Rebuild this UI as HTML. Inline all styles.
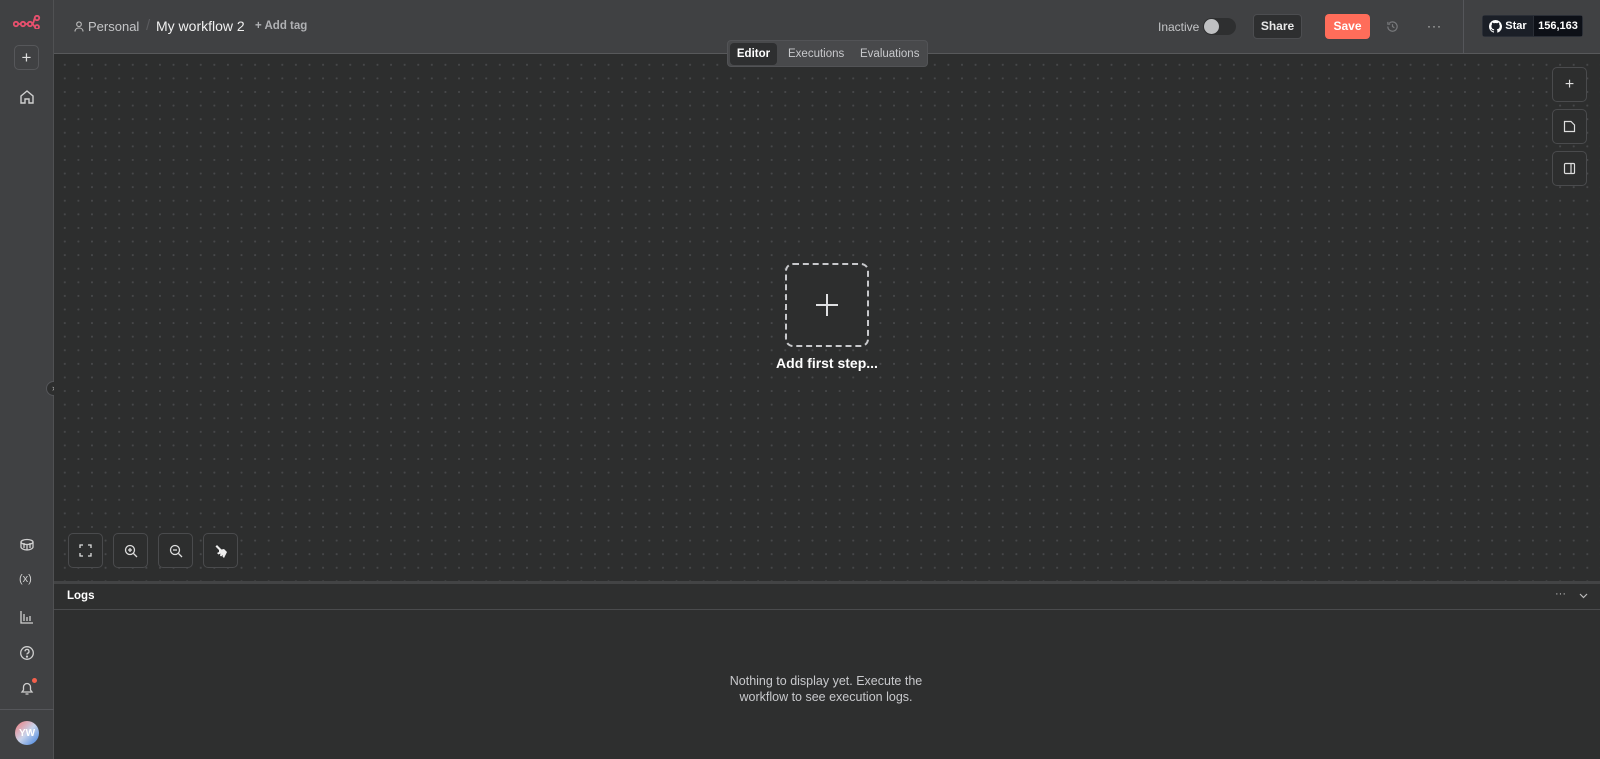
<!DOCTYPE html>
<html><head><meta charset="utf-8"><style>
*{box-sizing:border-box;margin:0;padding:0}
body{width:1600px;height:759px;overflow:hidden;background:#2e2f2f;font-family:"Liberation Sans",sans-serif;color:#e0e0e0;position:relative}
.abs{position:absolute}
#side{left:0;top:0;width:54px;height:759px;background:#404143;border-right:1px solid #505153}
#top{left:54px;top:0;width:1546px;height:54px;background:#404143;border-bottom:1px solid #58595b}
#canvas{left:54px;top:54px;width:1546px;height:527px;background-color:#2d2e2e;background-image:radial-gradient(circle,#47484a 0.9px,transparent 1.2px);background-size:13.6px 13.6px;background-position:4px 4px}
#logs{left:54px;top:581px;width:1546px;height:178px;background:#2e2f2f;border-top:3px solid #434445}
.btn{position:absolute;border:1px solid #4a4b4d;border-radius:5px;background:#2d2e2e;display:flex;align-items:center;justify-content:center}
svg{display:block}
</style></head><body>
<div id="side" class="abs">
 <svg class="abs" style="left:13px;top:15px" width="28" height="14" viewBox="0 0 28 14" fill="none" stroke="#e8506e" stroke-width="1.8"><circle cx="3" cy="9" r="2.2"/><circle cx="10" cy="9" r="2.2"/><circle cx="17" cy="9" r="2.2"/><circle cx="24" cy="3" r="2.2"/><circle cx="24" cy="12" r="2"/><path d="M5 9h3M12 9h3M19 9c2 0 2-6 3-6M19 9c2 0 2 3 3 3"/></svg>
 <div class="btn" style="left:14px;top:45px;width:25px;height:25px;background:#404143;border-color:#56575a;color:#ddd;font-size:17px">+</div>
 <svg class="abs" style="left:19px;top:89px" width="16" height="16" viewBox="0 0 16 16" fill="none" stroke="#cfcfcf" stroke-width="1.4"><path d="M2 7L8 2l6 5v7H10v-4H6v4H2z"/></svg>
 <svg class="abs" style="left:19px;top:537px" width="16" height="16" viewBox="0 0 16 16" fill="none" stroke="#cfcfcf" stroke-width="1.3"><ellipse cx="8" cy="5" rx="6" ry="2.5"/><path d="M2 5v5c0 1.5 3 3 6 3s6-1.5 6-3V5M5 6v5M8 7v6M11 6v5"/></svg>
 <div class="abs" style="left:19px;top:573px;font-size:11px;color:#cfcfcf">(x)</div>
 <svg class="abs" style="left:19px;top:609px" width="16" height="16" viewBox="0 0 16 16" fill="none" stroke="#cfcfcf" stroke-width="1.3"><path d="M2 2v12h12M5 5v7M8 8v4M11 7v5"/></svg>
 <svg class="abs" style="left:19px;top:645px" width="16" height="16" viewBox="0 0 16 16" fill="none" stroke="#cfcfcf" stroke-width="1.3"><circle cx="8" cy="8" r="6.3"/><path d="M6 6.3a2 2 0 1 1 2.5 2c-.5.2-.5.6-.5 1.2"/><circle cx="8" cy="11.6" r=".5" fill="#cfcfcf"/></svg>
 <svg class="abs" style="left:19px;top:680px" width="16" height="16" viewBox="0 0 16 16" fill="none" stroke="#cfcfcf" stroke-width="1.3"><path d="M3 12h10l-1.5-2V7a3.5 3.5 0 0 0-7 0v3zM6.5 14h3"/></svg>
 <div class="abs" style="left:32px;top:678px;width:5px;height:5px;border-radius:50%;background:#f4604c"></div>
 <div class="abs" style="left:0;top:709px;width:54px;border-top:1px solid #55565a"></div>
 <div class="abs" style="left:15px;top:721px;width:24px;height:24px;border-radius:50%;background:linear-gradient(135deg,#f07a7a,#c9d3ea 50%,#3a7fe0);color:#fff;font-size:10px;font-weight:bold;display:flex;align-items:center;justify-content:center">YW</div>
 <div class="abs" style="left:46px;top:381px;width:15px;height:15px;border-radius:50%;background:#2d2e2e;border:1px solid #55565a;color:#bbb;font-size:9px;text-align:center;line-height:12px">›</div>
</div>
<div id="top" class="abs">
 <svg class="abs" style="left:20px;top:21px" width="10" height="11" viewBox="0 0 10 11" fill="none" stroke="#bbb" stroke-width="1.1"><circle cx="5" cy="3.2" r="2.3"/><path d="M1 10.5c0-2.3 1.8-3.5 4-3.5s4 1.2 4 3.5"/></svg>
 <div class="abs" style="left:34px;top:19px;font-size:13px;color:#c4c5c7">Personal</div>
 <div class="abs" style="left:92px;top:17px;font-size:15px;color:#5a5b5e">/</div>
 <div class="abs" style="left:102px;top:18px;font-size:14px;color:#f0f0f0">My workflow 2</div>
 <div class="abs" style="left:201px;top:20px;font-size:11.5px;color:#b0b1b4;font-weight:bold">+ Add tag</div>
 <div class="abs" style="left:1104px;top:20px;font-size:12px;color:#c4c5c7">Inactive</div>
 <div class="abs" style="left:1149px;top:18px;width:33px;height:17px;border-radius:9px;background:#2e2f30"><div class="abs" style="left:1px;top:1px;width:15px;height:15px;border-radius:50%;background:#bfc0c2"></div></div>
 <div class="abs" style="left:1199px;top:14px;width:49px;height:25px;border-radius:4px;background:#2e2f30;border:1px solid #4c4d50;font-size:12px;font-weight:bold;color:#e8e8e8;text-align:center;line-height:23px">Share</div>
 <div class="abs" style="left:1271px;top:14px;width:45px;height:25px;border-radius:4px;background:#ff6d5a;font-size:12px;font-weight:bold;color:#fff;text-align:center;line-height:25px">Save</div>
 <svg class="abs" style="left:1332px;top:20px" width="13" height="13" viewBox="0 0 14 14" fill="none" stroke="#77787b" stroke-width="1.3"><path d="M2 7a5 5 0 1 0 1.5-3.5M2 2v2.5h2.5M7 4.5V7l2 1.3"/></svg>
 <div class="abs" style="left:1373px;top:19px;font-size:12px;color:#ccc;letter-spacing:1px">···</div>
 <div class="abs" style="left:1409px;top:0;height:53px;border-left:1px solid #55565a"></div>
 <div class="abs" style="left:1428px;top:15px;width:101px;height:22px;border-radius:3px;background:#161a22;border:1px solid #2a2e36;display:flex;font-size:11px;font-weight:bold;color:#fff">
  <div style="width:51px;display:flex;align-items:center;justify-content:center;gap:3px;border-right:1px solid #2a2e36;background:#1b1f27"><svg width="13" height="13" viewBox="0 0 16 16"><path fill="#fff" d="M8 0a8 8 0 0 0-2.5 15.6c.4 0 .5-.2.5-.4v-1.5c-2.2.5-2.7-1-2.7-1-.4-.9-.9-1.2-.9-1.2-.7-.5.1-.5.1-.5.8.1 1.200.8 1.2.8.7 1.3 1.9.9 2.4.7 0-.5.3-.9.5-1.1-1.8-.2-3.6-.9-3.6-4 0-.9.3-1.6.8-2.1-.1-.2-.4-1 .1-2.1 0 0 .7-.2 2.2.8a7.4 7.4 0 0 1 4 0c1.5-1 2.2-.8 2.2-.8.4 1.1.2 1.9.1 2.1.5.6.8 1.3.8 2.1 0 3.1-1.9 3.8-3.6 4 .3.3.6.8.6 1.5v2.2c0 .2.1.5.6.4A8 8 0 0 0 8 0z"/></svg>Star</div>
  <div style="flex:1;display:flex;align-items:center;justify-content:center;background:#0d1017">156,163</div>
 </div>
</div>
<div id="canvas" class="abs">
 <div class="abs" style="left:673px;top:-14px;width:201px;height:27px;border-radius:4px;background:#48494b;border:1px solid #525356"></div>
 <div class="abs" style="left:676px;top:-11px;width:47px;height:22px;border-radius:4px;background:#2e2f30;font-size:11.5px;font-weight:bold;color:#fff;text-align:center;line-height:22px">Editor</div>
 <div class="abs" style="left:734px;top:-6px;font-size:11.5px;color:#c8c9cc">Executions</div>
 <div class="abs" style="left:806px;top:-6px;font-size:11.5px;color:#c8c9cc">Evaluations</div>
 <div class="btn" style="left:1498px;top:13px;width:35px;height:35px;color:#ddd;font-size:16px">+</div>
 <div class="btn" style="left:1498px;top:55px;width:35px;height:35px"><svg width="13" height="13" viewBox="0 0 13 13" fill="none" stroke="#ddd" stroke-width="1.2"><path d="M1.5 1.5h6.5l3.5 3.5v6.5h-10z"/></svg></div>
 <div class="btn" style="left:1498px;top:97px;width:35px;height:35px"><svg width="13" height="13" viewBox="0 0 13 13" fill="none" stroke="#ddd" stroke-width="1.2"><rect x="1.5" y="1.5" width="10" height="10" rx="1"/><path d="M8 1.5v10"/></svg></div>
 <div class="abs" style="left:731px;top:209px;width:84px;height:84px;border:2px dashed #c8c9cc;border-radius:8px;background:#2d2e2e;display:flex;align-items:center;justify-content:center"><svg width="24" height="24" viewBox="0 0 24 24" stroke="#dfe0e2" stroke-width="2"><path d="M12 1v22M1 12h22"/></svg></div>
 <div class="abs" style="left:700px;top:301px;width:146px;text-align:center;font-size:14px;color:#fff;font-weight:bold">Add first step...</div>
 <div class="btn" style="left:14px;top:479px;width:35px;height:35px"><svg width="13" height="13" viewBox="0 0 13 13" fill="none" stroke="#ddd" stroke-width="1.3"><path d="M1 4V1h3M9 1h3v3M12 9v3H9M4 12H1V9"/></svg></div>
 <div class="btn" style="left:59px;top:479px;width:35px;height:35px"><svg width="14" height="14" viewBox="0 0 14 14" fill="none" stroke="#ddd" stroke-width="1.3"><circle cx="6" cy="6" r="4.5"/><path d="M9.5 9.5l3.5 3.5M4 6h4M6 4v4"/></svg></div>
 <div class="btn" style="left:104px;top:479px;width:35px;height:35px"><svg width="14" height="14" viewBox="0 0 14 14" fill="none" stroke="#ddd" stroke-width="1.3"><circle cx="6" cy="6" r="4.5"/><path d="M9.5 9.5l3.5 3.5M4 6h4"/></svg></div>
 <div class="btn" style="left:149px;top:479px;width:35px;height:35px"><svg width="14" height="14" viewBox="0 0 14 14"><path fill="#eee" d="M3 1l5 5-1.5 1.5L1.5 2.5zM5 6l5-1 3 3-3 6-1.5-1.5L9 11l-2 1.5-1-1 .5-2-2 1L3 9l2-1z"/></svg></div>
</div>
<div id="logs" class="abs">
 <div class="abs" style="left:0;top:0;width:1546px;height:26px;border-bottom:1px solid #4a4b4d"></div>
 <div class="abs" style="left:13px;top:6px;font-size:11.5px;font-weight:bold;color:#fff">Logs</div>
 <div class="abs" style="left:1501px;top:4px;font-size:11px;color:#bbb">···</div>
 <svg class="abs" style="left:1525px;top:9px" width="9" height="6" viewBox="0 0 9 6" fill="none" stroke="#bbb" stroke-width="1.2"><path d="M1 1l3.5 3.5L8 1"/></svg>
 <div class="abs" style="left:672px;top:89px;width:200px;text-align:center;font-size:12.5px;line-height:16px;color:#c8c9cc">Nothing to display yet. Execute the workflow to see execution logs.</div>
</div>
</body></html>
